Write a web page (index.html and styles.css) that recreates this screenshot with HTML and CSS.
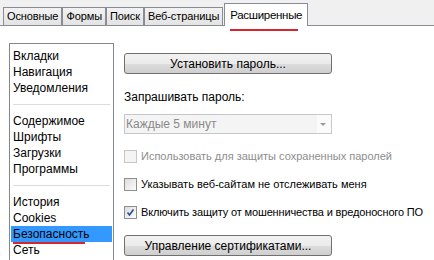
FILE: index.html
```html
<!DOCTYPE html>
<html lang="ru">
<head>
  <meta charset="UTF-8">
  <title>Настройки</title>
  <link rel="stylesheet" href="styles.css">
</head>
<body>
  <div class="tabs">
    <div class="tab">Основные</div>
    <div class="tab">Формы</div>
    <div class="tab">Поиск</div>
    <div class="tab">Веб-страницы</div>
    <div class="tab active">Расширенные</div>
  </div>
  <div class="panel">
    <div class="list">
      <div class="item">Вкладки</div>
      <div class="item">Навигация</div>
      <div class="item">Уведомления</div>
      <div class="sep"></div>
      <div class="item">Содержимое</div>
      <div class="item">Шрифты</div>
      <div class="item">Загрузки</div>
      <div class="item">Программы</div>
      <div class="sep"></div>
      <div class="item">История</div>
      <div class="item">Cookies</div>
      <div class="item selected">Безопасность</div>
      <div class="item">Сеть</div>
    </div>
    <div class="content">
      <button class="btn">Установить пароль...</button>
      <div class="label">Запрашивать пароль:</div>
      <div class="select">
        <span class="select-text">Каждые 5 минут</span>
        <span class="select-arrow"></span>
      </div>
      <div class="check disabled first">
        <span class="box"></span>
        <span>Использовать для защиты сохраненных паролей</span>
      </div>
      <div class="check">
        <span class="box"></span>
        <span>Указывать веб-сайтам не отслеживать меня</span>
      </div>
      <div class="check">
        <span class="box checked">
          <svg width="9" height="9" viewBox="0 0 9 9"><path d="M1.5 4.5 L3.5 7 L7.5 1.5" fill="none" stroke="#2b4b8f" stroke-width="1.6"/></svg>
        </span>
        <span class="long">Включить защиту от мошенничества и вредоносного ПО</span>
      </div>
      <button class="btn btn-last">Управление сертификатами...</button>
    </div>
  </div>
</body>
</html>
```

FILE: styles.css
```css
body {
  margin: 0;
  height: 260px;
  overflow: hidden;
  background: #f0f0f0;
  font-family: "Liberation Sans", Arial, sans-serif;
  font-size: 12px;
  color: #000;
}

.tabs {
  display: flex;
  align-items: flex-end;
  height: 25px;
  padding-left: 3px;
  border-bottom: 1px solid #898c95;
}

.tab {
  height: 17px;
  line-height: 17px;
  padding: 0 3px;
  border: 1px solid #898c95;
  border-bottom: none;
  background: linear-gradient(#f2f2f2, #e3e3e3);
  white-space: nowrap;
  font-size: 11px;
  letter-spacing: -0.1px;
}

.tab.active {
  position: relative;
  height: 22px;
  line-height: 22px;
  margin-bottom: -1px;
  margin-left: 1px;
  padding: 0 5px;
  background: #fff;
  font-size: 11.5px;
  letter-spacing: -0.3px;
}

.tab.active::after {
  content: "";
  position: absolute;
  left: 5px;
  right: 9px;
  top: 25px;
  height: 2px;
  background: #d7262b;
}

.panel {
  display: flex;
  height: 240px;
  padding: 17px 0 0 9px;
  background: #fff;
}

.list {
  width: 101px;
  flex: none;
  padding: 4px 1px 0;
  border: 1px solid #828790;
  border-bottom: none;
}

.item {
  height: 16px;
  line-height: 16px;
  padding-left: 2px;
  white-space: nowrap;
}

.item.selected {
  position: relative;
  background: #3399ff;
}

.item.selected::after {
  content: "";
  position: absolute;
  left: 2px;
  width: 72px;
  top: 16px;
  height: 2px;
  background: #d7262b;
}

.sep {
  height: 1px;
  margin: 8px 2px;
  background: #dcdcdc;
}

.content {
  display: flex;
  flex-direction: column;
  width: 208px;
  padding-top: 10px;
  margin-left: 10px;
}

.btn {
  width: 208px;
  height: 21px;
  padding: 0;
  border: 1px solid #707070;
  border-radius: 3px;
  background: linear-gradient(#f2f2f2 0%, #ebebeb 50%, #dddddd 50%, #cfcfcf 100%);
  font: inherit;
  color: #000;
}

.label {
  height: 16px;
  line-height: 16px;
  margin-top: 15px;
}

.select {
  display: flex;
  align-items: center;
  height: 18px;
  margin-top: 9px;
  border: 1px solid #c5c8cb;
  background: linear-gradient(90deg, #f4f4f4 0, #f4f4f4 192px, #fbfbfb 192px);
}

.select-text {
  flex: 1;
  padding-left: 1px;
  color: #8a8a8a;
}

.select-arrow {
  width: 0;
  height: 0;
  margin-right: 5px;
  border-left: 3px solid transparent;
  border-right: 3px solid transparent;
  border-top: 3px solid #9a9a9a;
}

.check {
  display: flex;
  align-items: center;
  gap: 4px;
  height: 16px;
  margin-top: 12px;
  white-space: nowrap;
  font-size: 11px;
}

.check .long {
  letter-spacing: -0.15px;
}

.check.first {
  margin-top: 14px;
}

.check.disabled {
  color: #8d8d8d;
}

.box {
  display: flex;
  align-items: center;
  justify-content: center;
  width: 11px;
  height: 11px;
  flex: none;
  border: 1px solid #8f8f8f;
  background: linear-gradient(135deg, #dcdcdc, #fcfcfc);
}

.check.disabled .box {
  border-color: #c7c7c7;
  background: #f4f4f4;
}

.btn-last {
  margin-top: 15px;
}
```
